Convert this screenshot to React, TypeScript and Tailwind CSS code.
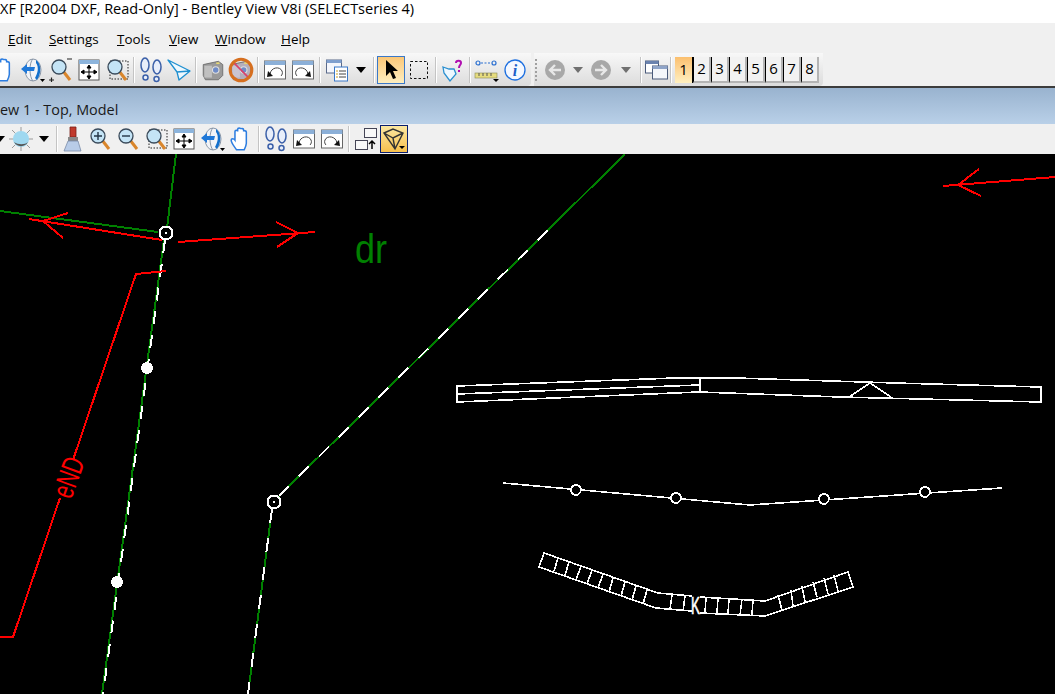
import React from 'react';

const uiFont = { fontFamily: '"Open Sans", "Noto Sans", sans-serif' };

function Sep() {
  return <div className="w-[2px] h-[26px] mx-[2px] bg-[#c4c4c4] border-r border-white shrink-0" />;
}

function Btn({ w = 28, active, children }: { w?: number; active?: boolean; children: React.ReactNode }) {
  return (
    <div
      style={{ width: w }}
      className={
        active
          ? 'h-[28px] shrink-0 flex items-center justify-center border border-[#3a78c8] bg-gradient-to-b from-[#fbc777] to-[#fdeec0]'
          : 'h-[28px] shrink-0 flex items-center justify-center'
      }
    >
      {children}
    </div>
  );
}

function Caret({ color = '#000' }: { color?: string }) {
  return (
    <svg width="12" height="8" viewBox="0 0 12 8">
      <path d="M1 1h10L6 7z" fill={color} />
    </svg>
  );
}

function Hand() {
  return (
    <svg width="26" height="26" viewBox="0 0 24 24">
      <path d="M7 22c-2-3-5-6-5-9 0-1.500 2.500-1.500 3.500 0V5c0-1.500 2.500-1.500 2.500 0V3c0-1.500 2.800-1.500 2.800 0v0c0-1 2.700-1 2.700 .5V5c0-1 2.500-1 2.500 .5V16c0 2-1 4-2 6z" fill="#fff" stroke="#2c7de0" strokeWidth="1.400" />
    </svg>
  );
}

function Rotate() {
  return (
    <svg width="26" height="26" viewBox="0 0 26 26">
      <ellipse cx="13" cy="13" rx="8" ry="11" fill="#f2f4f8" stroke="#8a97a8" />
      <path d="M13 2c-4 3-4 18 0 22" fill="none" stroke="#8a97a8" />
      <path d="M1 12l6-5v3h8l-1 4H7v3z" fill="#1f78d8" />
      <path d="M16 3c5 3 6 13 1 20l-2-2c3-5 4-11 1-15z" fill="#1470cc" />
      <path d="M20 22h5l-2.500 3z" fill="#000" />
    </svg>
  );
}

function Glass({ mark }: { mark?: 'plus' | 'minus' | 'both' | 'window' }) {
  return (
    <svg width="24" height="24" viewBox="0 0 24 24">
      {mark === 'window' && <rect x="5" y="3" width="18" height="18" fill="none" stroke="#222" strokeDasharray="1.500 1.500" />}
      <path d="M14 13l7 9" stroke="#d9862c" strokeWidth="3" />
      <circle cx="10" cy="9" r="7" fill="#c4e4f6" stroke="#3a4a5a" strokeWidth="1.300" />
      {mark === 'plus' && <path d="M6 9h8M10 5v8" stroke="#234" strokeWidth="1.400" />}
      {mark === 'minus' && <path d="M6 9h8" stroke="#234" strokeWidth="1.400" />}
      {mark === 'both' && <path d="M18 1h5M0 22h5M2.500 19.500v5" stroke="#222" strokeWidth="1.200" />}
    </svg>
  );
}

function Fit() {
  return (
    <svg width="24" height="24" viewBox="0 0 24 24">
      <rect x="2" y="2" width="20" height="20" fill="#fff" stroke="#555" />
      <rect x="2" y="2" width="20" height="4" fill="#8cb4dc" />
      <path d="M12 8v12M5 14h14M12 7l-2 3h4zM12 21l-2-3h4zM4 14l3-2v4zM20 14l-3-2v4z" stroke="#000" fill="#000" strokeWidth="1" />
    </svg>
  );
}

function Steps() {
  return (
    <svg width="24" height="26" viewBox="0 0 24 26">
      <g fill="#e8eefa" stroke="#3a5fa8" strokeWidth="1.500">
        <ellipse cx="6" cy="8" rx="4" ry="7" />
        <circle cx="6.500" cy="20.500" r="2.500" />
        <ellipse cx="18" cy="10" rx="4" ry="7" />
        <circle cx="17.500" cy="22" r="2.500" />
      </g>
    </svg>
  );
}

function Plane() {
  return (
    <svg width="24" height="24" viewBox="0 0 24 24">
      <path d="M1 2l22 11-11 9-2-8zM10 14L23 13M1 2l9 12" fill="#eef8fe" stroke="#1e8fd0" strokeWidth="1.300" strokeLinejoin="round" />
    </svg>
  );
}

function Camera({ off }: { off?: boolean }) {
  return (
    <svg width="26" height="26" viewBox="0 0 24 24">
      {off && <circle cx="12" cy="12" r="10.500" fill="#e8e4e4" />}
      <path d="M3 7l14-3 4 3v10l-4 4H5l-2-4z" fill={off ? '#b4aebc' : '#9a9a9a'} stroke="#6a6a6a" strokeWidth=".8" />
      <rect x="4" y="8" width="7" height="11" fill={off ? '#cac4d0' : '#c0c0c0'} />
      <circle cx="14.500" cy="12" r="3" fill="#6f8cc8" stroke="#e0e0e0" />
      <rect x="15" y="5" width="3" height="1.500" fill="#e8d870" />
      {off && <path d="M5 5l14 14" stroke="#d8406a" strokeWidth="1.500" />}
      {off && <circle cx="12" cy="12" r="10" fill="none" stroke="#d66f1f" strokeWidth="2.800" />}
    </svg>
  );
}

function Undo({ redo }: { redo?: boolean }) {
  return (
    <svg width="24" height="24" viewBox="0 0 24 24">
      <rect x="1.500" y="3" width="21" height="18" fill="#fff" stroke="#666" />
      <rect x="1.500" y="3" width="21" height="4" fill="#8cb0d8" />
      <g transform={redo ? 'matrix(-1 0 0 1 24 0)' : undefined}>
        <path d="M7 16c1-7 10-8 12-3 1 2 0 4-1 5" fill="none" stroke="#444" />
        <path d="M4 19l1-6 5 5z" fill="#111" />
      </g>
    </svg>
  );
}

function Windows() {
  return (
    <svg width="24" height="24" viewBox="0 0 24 24">
      <rect x="1.500" y="2" width="15" height="13" fill="#f4f6fc" stroke="#5a6a8a" />
      <rect x="1.500" y="2" width="15" height="3" fill="#7f9fce" />
      <rect x="9.500" y="9" width="13" height="14" fill="#fff" stroke="#3a78c8" />
      <path d="M14 13h7M14 16h7M14 19h7" stroke="#444" />
      <path d="M11 13h2M11 16h2M11 19h2" stroke="#c8a020" />
    </svg>
  );
}

function Arrow() {
  return (
    <svg width="16" height="22" viewBox="0 0 16 22">
      <path d="M3 1v16l4-4 3 7 3-1-3-7h5z" fill="#000" />
    </svg>
  );
}

function Dashed() {
  return (
    <svg width="22" height="22" viewBox="0 0 22 22">
      <rect x="2.500" y="2.500" width="17" height="17" fill="none" stroke="#111" strokeDasharray="2.500 2" />
    </svg>
  );
}

function HelpTag() {
  return (
    <svg width="24" height="24" viewBox="0 0 24 24">
      <path d="M2 9l6 2 5 0 2 5-6 7-6-8z" fill="#eef8ff" stroke="#2a8fd0" strokeWidth="1.300" />
      <path d="M15 5c0-3 5-3 5 0 0 2-2 2-2 5" fill="none" stroke="#b010b0" strokeWidth="2" />
      <rect x="17" y="12" width="2" height="2" fill="#b010b0" />
    </svg>
  );
}

function Measure() {
  return (
    <svg width="26" height="26" viewBox="0 0 26 26">
      <circle cx="4" cy="6" r="2" fill="none" stroke="#2a6fd0" strokeWidth="1.200" />
      <circle cx="20" cy="6" r="2" fill="none" stroke="#2a6fd0" strokeWidth="1.200" />
      <path d="M7 6h10" stroke="#2a6fd0" strokeDasharray="2 1.500" />
      <rect x="1" y="16" width="22" height="5" fill="#e6dc80" stroke="#8a8a50" strokeWidth=".6" />
      <path d="M5 16v3M9 16v3M13 16v3M17 16v3" stroke="#555" />
      <path d="M19 22h6l-3 3z" fill="#000" />
    </svg>
  );
}

function Info() {
  return (
    <svg width="24" height="24" viewBox="0 0 24 24">
      <circle cx="12" cy="12" r="10" fill="#f4f8ff" stroke="#1c6fe0" strokeWidth="1.300" />
      <text x="12" y="18" textAnchor="middle" fontSize="16" fontWeight="700" fontStyle="italic" fill="#1c5fc8" fontFamily="Liberation Serif, serif">i</text>
    </svg>
  );
}

function Nav({ right }: { right?: boolean }) {
  return (
    <svg width="22" height="22" viewBox="0 0 22 22">
      <circle cx="11" cy="11" r="10" fill="#a8a8a8" />
      <path d={right ? 'M5 11h10M11 6l5 5-5 5' : 'M17 11H7M11 6l-5 5 5 5'} fill="none" stroke="#e8e8e8" strokeWidth="2.400" />
    </svg>
  );
}

function Views() {
  return (
    <svg width="24" height="24" viewBox="0 0 24 24">
      <rect x="1.500" y="3" width="13" height="12" fill="#fff" stroke="#4a5a7a" />
      <rect x="1.500" y="3" width="13" height="3" fill="#6a82ae" />
      <rect x="8.500" y="8" width="15" height="13" fill="#f4f6fa" stroke="#4a5a7a" />
      <rect x="8.500" y="8" width="15" height="3" fill="#8fa4c8" />
    </svg>
  );
}

function Sun() {
  return (
    <svg width="26" height="26" viewBox="0 0 26 26">
      <path d="M13 1v24M1 13h24M4 4l18 18M22 4L4 22" stroke="#9a9a9a" />
      <circle cx="13" cy="13" r="8" fill="#9fd8f0" />
      <path d="M6 16a8 8 0 0 0 14 0c-3 3-10 3-14 0z" fill="#555" />
    </svg>
  );
}

function Brush() {
  return (
    <svg width="24" height="26" viewBox="0 0 24 26">
      <path d="M9 1h6v10H9z" fill="#c0392b" stroke="#7a2018" strokeWidth=".8" />
      <rect x="7" y="11" width="10" height="4" fill="#8a8a8a" />
      <path d="M7 15h10l3 10H3z" fill="#b8cce8" stroke="#7a8ca8" strokeWidth=".8" />
    </svg>
  );
}

function CopyView() {
  return (
    <svg width="24" height="24" viewBox="0 0 24 24">
      <rect x="10.500" y="1.500" width="12" height="9" fill="#f8f8f8" stroke="#445" />
      <rect x="1.500" y="13.500" width="12" height="9" fill="#f8f8f8" stroke="#445" />
      <path d="M18 22v-7M15 17l3-3 3 3" fill="none" stroke="#000" strokeWidth="1.500" />
    </svg>
  );
}

function Cube() {
  return (
    <div className="w-[28px] h-[28px] shrink-0 flex items-center justify-center border border-[#0a1f6e] bg-gradient-to-b from-[#fbe7a0] to-[#f8c04a]">
      <svg width="24" height="24" viewBox="0 0 24 24">
        <path d="M2 6l9-4 10 4-8 16zM2 6l9 5 10-5M11 11l2 11" fill="none" stroke="#333" strokeWidth="1.400" />
        <path d="M17 19h6l-3 3z" fill="#000" />
      </svg>
    </div>
  );
}

function MainToolbar() {
  return (
    <div className="h-[33px] flex items-center bg-[#f0f0f0]">
      <div className="h-[33px] w-[540px] ml-[-9px] flex items-center shrink-0 rounded-br-sm bg-gradient-to-b from-[#f8f8f8] to-[#dcdcdc]">
        <Btn><Hand /></Btn>
        <Btn><Rotate /></Btn>
        <Btn><Glass mark="both" /></Btn>
        <Btn><Fit /></Btn>
        <Btn><Glass mark="window" /></Btn>
        <Sep />
        <Btn><Steps /></Btn>
        <Btn><Plane /></Btn>
        <Sep />
        <Btn><Camera /></Btn>
        <Btn><Camera off /></Btn>
        <Sep />
        <Btn><Undo /></Btn>
        <Btn><Undo redo /></Btn>
        <Sep />
        <Btn><Windows /></Btn>
        <Btn w={20}><Caret /></Btn>
        <Sep />
        <Btn active><Arrow /></Btn>
        <Btn><Dashed /></Btn>
        <Sep />
        <Btn><HelpTag /></Btn>
        <Sep />
        <Btn><Measure /></Btn>
        <Btn><Info /></Btn>
      </div>
      <div className="h-[33px] w-[289px] ml-[3px] flex items-center shrink-0 rounded-br-sm bg-gradient-to-b from-[#f8f8f8] to-[#dcdcdc]">
        <div className="w-[7px] h-[22px] ml-[1px] border-l-2 border-dotted border-[#a0a0a0]" />
        <Btn w={26}><Nav /></Btn>
        <Btn w={20}><Caret color="#707070" /></Btn>
        <Btn w={26}><Nav right /></Btn>
        <Btn w={24}><Caret color="#707070" /></Btn>
        <Sep />
        <Btn w={24}><Views /></Btn>
        <Sep />
        <div className="flex items-center ml-[1px]">
          {['1', '2', '3', '4', '5', '6', '7', '8'].map((n, i) => (
            <div
              key={n}
              className={
                i === 0
                  ? 'w-[18px] h-[26px] flex items-center justify-center text-[15px] text-black border-r border-black bg-gradient-to-b from-[#fbbf6e] to-[#fff0c0]'
                  : 'w-[18px] h-[26px] flex items-center justify-center text-[15px] text-black border-l border-black border-r-2 border-r-[#b4b4b4] border-b-2 border-b-[#b4b4b4] bg-[#f2f2f2]'
              }
            >
              {n}
            </div>
          ))}
        </div>
      </div>
    </div>
  );
}

function ViewToolbar() {
  return (
    <div className="h-[30px] flex items-center bg-[#f0f0f0] ml-[-8px]">
      <Btn w={16}><Caret /></Btn>
      <Btn w={26}><Sun /></Btn>
      <Btn w={20}><Caret /></Btn>
      <Sep />
      <Btn w={26}><Brush /></Btn>
      <Btn><Glass mark="plus" /></Btn>
      <Btn><Glass mark="minus" /></Btn>
      <Btn><Glass mark="window" /></Btn>
      <Btn><Fit /></Btn>
      <Btn w={29}><Rotate /></Btn>
      <Btn w={29}><Hand /></Btn>
      <Sep />
      <Btn><Steps /></Btn>
      <Btn><Undo /></Btn>
      <Btn><Undo redo /></Btn>
      <Sep />
      <Btn><CopyView /></Btn>
      <Cube />
    </div>
  );
}

// tick marks on the bent strip, pairs of top and bottom points
const ticks = [
  [558, 558, 554, 571], [569, 562, 565, 575], [581, 566, 576, 580], [592, 570, 587, 584],
  [603, 574, 598, 588], [613, 578, 609, 592], [625, 582, 621, 596], [636, 586, 632, 600],
  [647, 590, 643, 604], [672, 595, 670, 609], [685, 596, 683, 611], [706, 597, 705, 613],
  [718, 598, 717, 613], [729, 599, 728, 614], [742, 599, 740, 615], [753, 600, 752, 615],
  [778, 595, 782, 610], [791, 590, 793, 606], [802, 586, 805, 602], [813, 582, 817, 597],
  [824, 578, 828, 594], [834, 575, 838, 591],
];

const beamCircles = [[576, 490], [676, 498], [824, 499], [925, 492]];

function Drawing() {
  return (
    <svg className="block w-full h-[540px] bg-black" viewBox="0 154 1055 540" shapeRendering="crispEdges">
      {/* green and red construction lines */}
      <g fill="none" stroke="#008000" strokeWidth="2">
        <path d="M176 154L167 228" />
        <path d="M0 211L158 232" />
        <path d="M164 240L102 694" />
        <path d="M279 496L625 154" />
        <path d="M272 509L248 694" />
      </g>
      <g fill="none" stroke="#fff" strokeWidth="2">
        <path d="M165 240L103 694" strokeDasharray="13 11" />
        <path d="M279 496L556 222" strokeDasharray="14 14" />
        <path d="M272 509L248 694" strokeDasharray="14 15" />
      </g>
      <g fill="none" stroke="#f00" strokeWidth="2">
        <path d="M29 219L162 240" />
        <path d="M68 213L43 221L63 238" />
        <path d="M178 242L315 232" />
        <path d="M276 222L298 233L277 247" />
        <path d="M1055 177L943 186" />
        <path d="M979 169L958 185L981 196" />
        <path d="M166 271L136 274L73 460" />
        <path d="M60 498L13 637L0 637" />
      </g>
      <text x="355" y="263" fill="#008000" fontSize="40" textLength="32" lengthAdjust="spacingAndGlyphs" fontFamily="Liberation Sans, sans-serif">dr</text>
      <text transform="translate(71 500) rotate(-70)" fill="#f00" fontSize="30" textLength="41" lengthAdjust="spacingAndGlyphs" fontFamily="Liberation Sans, sans-serif">eND</text>

      {/* node markers */}
      <g fill="#000" stroke="#fff" strokeWidth="2">
        <circle cx="166" cy="233" r="6.500" />
        <circle cx="274" cy="502" r="6.500" />
      </g>
      <g fill="#fff">
        <circle cx="166" cy="233" r="1" />
        <circle cx="274" cy="502" r="1" />
        <circle cx="147" cy="368" r="6" />
        <circle cx="117" cy="582" r="6" />
      </g>

      {/* beam */}
      <g fill="none" stroke="#fff" strokeWidth="1.600">
        <path d="M457 386L675 378L736 378L895 383L1041 387V402L840 397L699 392L457 402Z" />
        <path d="M457 394L699 385M700 378V392" />
        <path d="M849 397L870 383L891 397" />
      </g>

      {/* centre line with circles */}
      <path d="M503 483L750 505L1002 488" fill="none" stroke="#fff" strokeWidth="1.600" />
      <g fill="#000" stroke="#fff" strokeWidth="1.600">
        {beamCircles.map(([x, y]) => (
          <circle key={x} cx={x} cy={y} r="5" />
        ))}
      </g>

      {/* bent strip */}
      <g fill="none" stroke="#fff" strokeWidth="1.600">
        <path d="M692 596L658 593L544 553L539 567L656 608L692 611" />
        <path d="M700 597L765 601L848 572L853 587L765 616L700 613" />
        {ticks.map(([a, b, c, d]) => (
          <path key={a} d={`M${a} ${b}L${c} ${d}`} />
        ))}
      </g>
      <text x="691" y="614" fill="#fff" stroke="#fff" strokeWidth=".7" fontSize="24" textLength="9" lengthAdjust="spacingAndGlyphs" fontFamily="Liberation Sans, sans-serif">K</text>
    </svg>
  );
}

export default function App() {
  return (
    <div className="w-[1055px] h-[694px] overflow-hidden flex flex-col bg-[#f0f0f0]" style={uiFont}>
      <div className="h-[23px] bg-white text-[14.5px] leading-[17px] text-black whitespace-nowrap">
        XF [R2004 DXF, Read-Only] - Bentley View V8i (SELECTseries 4)
      </div>
      <div className="h-[30px] flex items-center pt-[3px] text-[13.4px] text-black bg-[#f0f0f0] pl-[8px]">
        <span className="w-[41px]"><u>E</u>dit</span>
        <span className="w-[68px]"><u>S</u>ettings</span>
        <span className="w-[52px]"><u>T</u>ools</span>
        <span className="w-[46px]"><u>V</u>iew</span>
        <span className="w-[66px]"><u>W</u>indow</span>
        <span><u>H</u>elp</span>
      </div>
      <MainToolbar />
      <div className="h-[2px] bg-[#3c3c3c]" />
      <div className="h-[36px] flex items-end pb-[3px] bg-gradient-to-b from-[#99b3cf] to-[#b9d0e8] text-[14.4px] text-[#1a1a1a] whitespace-nowrap">
        ew 1 - Top, Model
      </div>
      <ViewToolbar />
      <Drawing />
    </div>
  );
}
